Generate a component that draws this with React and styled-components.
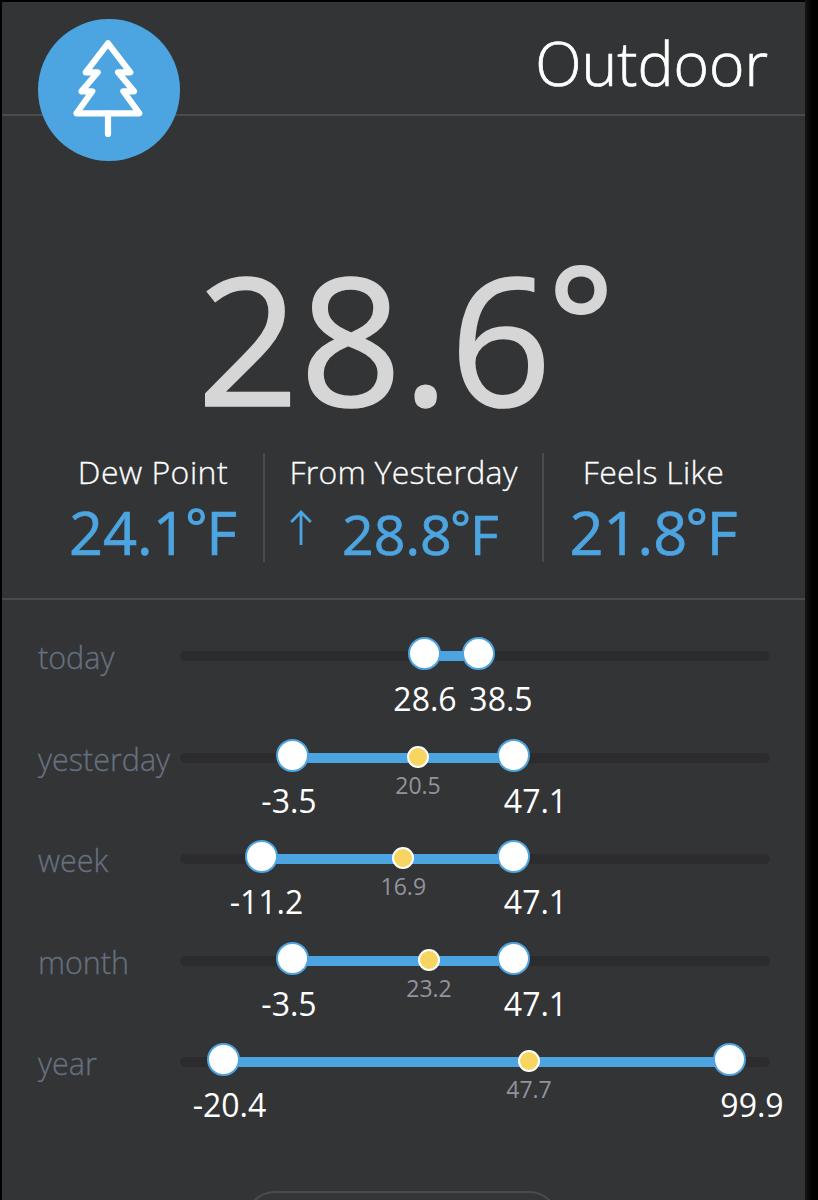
import React from "react";
import styled, { createGlobalStyle } from "styled-components";

const GlobalStyle = createGlobalStyle`
  * { box-sizing: border-box; }
  body { margin: 0; background: #000; }
`;

const Screen = styled.div`
  width: 818px;
  height: 1200px;
  padding: 2px 13px 0 2px;
  overflow: hidden;
  background: linear-gradient(to right, #000 805px, #151515 805px, #000 812px);
  font-family: "Open Sans", "Noto Sans", sans-serif;
  white-space: nowrap;
`;

const Panel = styled.main`
  height: 1198px;
  display: flex;
  flex-direction: column;
  align-items: stretch;
  overflow: hidden;
  background: #333436;
`;

const Header = styled.header`
  height: 114px;
  flex: none;
  display: flex;
  justify-content: space-between;
  align-items: flex-start;
  padding: 17px 37px 0 36px;
  border-bottom: 2px solid #4a4b4d;
`;

const Badge = styled.div`
  width: 141.5px;
  height: 141.5px;
  flex: none;
  border-radius: 50%;
  background: #4ca4e0;
  z-index: 1;
  svg { display: block; }
`;

const Title = styled.h1`
  margin: 4px 0 0;
  font-size: 60.5px;
  line-height: 80px;
  font-weight: 300;
  -webkit-text-stroke: 0.7px currentColor;
  color: #fff;
`;

const Current = styled.div`
  height: 337px;
  flex: none;
  padding: 121px 0 0 195px;
  font-size: 178.5px;
  line-height: 200px;
  font-weight: 400;
  -webkit-text-stroke: 1.6px currentColor;
  letter-spacing: 0.6px;
  color: #d6d6d6;
`;

const Degree = styled.span`
  font-size: 0.87em;
  font-weight: 600;
  -webkit-text-stroke: 0;
  line-height: 0;
  vertical-align: ${(p) => p.$raise}em;
  margin: 0 -0.02em 0 -0.03em;
`;

const Stats = styled.section`
  height: 147px;
  flex: none;
  display: grid;
  grid-template-columns: 222px 279px 219px;
  align-items: start;
  padding-left: 41px;
  border-bottom: 2px solid #4a4b4d;
`;

const Stat = styled.div`
  height: 109px;
  display: flex;
  flex-direction: column;
  align-items: center;
  border-right: ${(p) => (p.$last ? "none" : "2px solid #4a4b4d")};
`;

const StatLabel = styled.div`
  padding-top: 1px;
  font-size: 32px;
  line-height: 36px;
  font-weight: 300;
  -webkit-text-stroke: 0.3px currentColor;
  color: #fff;
  letter-spacing: ${(p) => p.$spacing || 0}px;
`;

const StatValue = styled.div`
  display: flex;
  align-items: flex-start;
  align-self: ${(p) => (p.$start ? "flex-start" : "center")};
  padding-left: ${(p) => (p.$start ? 25 : 0)}px;
  gap: 30px;
  font-size: ${(p) => p.$size}px;
  -webkit-text-stroke: 0.7px currentColor;
  line-height: ${(p) => p.$line}px;
  color: #4ca4e0;
  svg { display: block; margin-top: 20px; }
`;

const History = styled.section`
  flex: none;
  padding: 38px 35px 0 36px;
`;

const Row = styled.div`
  height: 101.5px;
  display: grid;
  grid-template-columns: 142px 590px;
`;

const RowLabel = styled.div`
  margin-top: -1px;
  font-size: 30.5px;
  line-height: 40px;
  font-weight: 300;
  -webkit-text-stroke: 0.3px currentColor;
  color: #66717f;
`;

const Track = styled.div`
  position: relative;
  height: 10px;
  margin-top: 13px;
  border-radius: 5px;
  background: #2c2c2e;
`;

const Range = styled.div`
  position: absolute;
  top: 0;
  height: 10px;
  background: #4ca4e0;
`;

const Knob = styled.div`
  position: absolute;
  top: -14px;
  width: 33px;
  height: 33px;
  margin-left: -16.5px;
  border-radius: 50%;
  border: 2px solid #4ca4e0;
  background: #fff;
`;

const Mean = styled.div`
  position: absolute;
  top: -7px;
  width: 22px;
  height: 22px;
  margin-left: -11px;
  border-radius: 50%;
  border: 2.5px solid #fff;
  background: #f6d560;
`;

const Value = styled.div`
  position: absolute;
  top: 28px;
  transform: translateX(-50%);
  font-size: 32px;
  line-height: 40px;
  color: #fff;
`;

const MeanValue = styled(Value)`
  top: 16px;
  font-size: 23px;
  line-height: 32px;
  color: #92939c;
`;

const MoreButton = styled.button`
  width: 314px;
  height: 60px;
  flex: none;
  margin: 45px 0 0 243px;
  padding: 0;
  border: 2px solid #4a4b4d;
  border-radius: 30px;
  background: #343439;
`;

const rows = [
  { name: "today", low: [244, 245, "28.6"], high: [298, 321, "38.5"] },
  { name: "yesterday", low: [112.5, 109, "-3.5"], high: [333.7, 355.5, "47.1"], mean: [238, "20.5"] },
  { name: "week", low: [81, 86.5, "-11.2"], high: [333.7, 355.5, "47.1"], mean: [223.3, "16.9"] },
  { name: "month", low: [112.5, 109, "-3.5"], high: [333.7, 355.5, "47.1"], mean: [249, "23.2"] },
  { name: "year", low: [43.3, 49.5, "-20.4"], high: [549.5, 572, "99.9"], mean: [349, "47.7"] },
];

function TreeIcon() {
  return (
    <svg width="142" height="142" viewBox="38 19 142 142" fill="none" stroke="#fff" strokeWidth="6.2" strokeLinecap="round" strokeLinejoin="round">
      <path d="M108 43.3L130.3 72.3H118L134 91.3H123.3L139.3 113.3H76.5L92.3 91.3H81.5L97.7 72.3H85.7Z" />
      <path d="M108 113.3V134" />
    </svg>
  );
}

function ArrowUp() {
  return (
    <svg width="22" height="36" viewBox="0 0 22 36" fill="none" stroke="#4ca4e0" strokeWidth="2.8">
      <path d="M11 35V2M1.2 12L11 2L20.8 12" />
    </svg>
  );
}

function HistoryRow({ name, low, high, mean }) {
  return (
    <Row>
      <RowLabel>{name}</RowLabel>
      <Track>
        <Range style={{ left: low[0], width: high[0] - low[0] }} />
        <Knob style={{ left: low[0] }} />
        <Knob style={{ left: high[0] }} />
        {mean && <Mean style={{ left: mean[0] }} />}
        {mean && <MeanValue style={{ left: mean[0] }}>{mean[1]}</MeanValue>}
        <Value style={{ left: low[1] }}>{low[2]}</Value>
        <Value style={{ left: high[1] }}>{high[2]}</Value>
      </Track>
    </Row>
  );
}

export default function App() {
  return (
    <Screen>
      <GlobalStyle />
      <Panel>
        <Header>
          <Badge><TreeIcon /></Badge>
          <Title>Outdoor</Title>
        </Header>
        <Current>28.6<Degree $raise={0.18}>°</Degree></Current>
        <Stats>
          <Stat>
            <StatLabel $spacing={0.5}>Dew Point</StatLabel>
            <StatValue $size={59.5} $line={84}><span>24.1<Degree $raise={0.18}>°</Degree>F</span></StatValue>
          </Stat>
          <Stat>
            <StatLabel $spacing={0.25}>From Yesterday</StatLabel>
            <StatValue $size={55.5} $line={87} $start><ArrowUp /><span>28.8<Degree $raise={0.18}>°</Degree>F</span></StatValue>
          </Stat>
          <Stat $last>
            <StatLabel $spacing={0.3}>Feels Like</StatLabel>
            <StatValue $size={59.5} $line={84}><span>21.8<Degree $raise={0.18}>°</Degree>F</span></StatValue>
          </Stat>
        </Stats>
        <History>
          {rows.map((row) => <HistoryRow key={row.name} {...row} />)}
        </History>
        <MoreButton aria-label="More" />
      </Panel>
    </Screen>
  );
}
